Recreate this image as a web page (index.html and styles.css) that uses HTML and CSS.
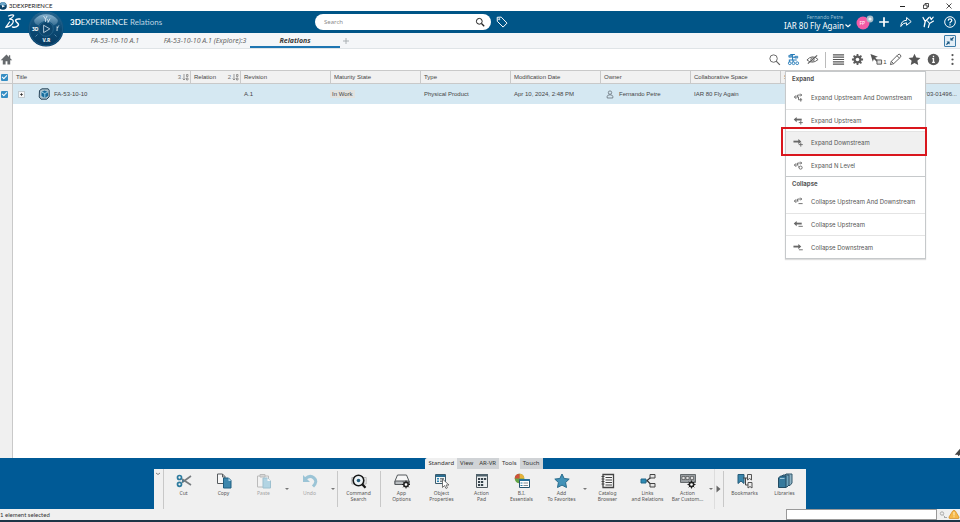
FILE: index.html
```html
<!DOCTYPE html>
<html lang="en">
<head>
<meta charset="utf-8">
<title>3DEXPERIENCE</title>
<link rel="stylesheet" href="styles.css">
</head>
<body>
<header class="titlebar">
  <svg class="app-icon" viewBox="0 0 8 8"><circle cx="3" cy="4" r="3.8" fill="#0d4368"/><path d="M0 3a3 3 0 0 1 6 0L3 4z" fill="#6ba5c8"/><path d="M2 3l3 1.2L2 5.4z" fill="#fff"/></svg>
  <span class="app-name">3DEXPERIENCE</span>
  <div class="window-controls">
    <button aria-label="Minimize"><svg viewBox="0 0 8 8"><path d="M1 4.5h5" stroke="#222" fill="none"/></svg></button>
    <button aria-label="Restore"><svg viewBox="0 0 8 8"><path d="M1.5 3h3.5v3.5H1.5zM3 3V1.5h3.500V5H5" stroke="#222" stroke-width=".8" fill="none"/></svg></button>
    <button aria-label="Close"><svg viewBox="0 0 8 8"><path d="M1.500 1.500l5 5m0-5l-5 5" stroke="#222" stroke-width=".8" fill="none"/></svg></button>
  </div>
</header>

<div class="topbar">
  <svg class="ds-logo" viewBox="0 0 16 16" fill="none" stroke="#fff" stroke-linecap="round" stroke-linejoin="round"><path d="M3.500 2q4-1.700 5.200-.7Q8.600 3 4.800 5" stroke-width="1.200"/><path d="M4.800 5Q9.300 5.400 8 8.500 6.200 12.500.8 13.300L4.500 8" stroke-width="1.300"/><path d="M15 5.100q-3.600-.6-4.400 1-.1 1.400 1.700 2.700 2 1.600.6 2.900Q11 13.700 7.500 13" stroke-width="1.500"/></svg>
  <button class="compass" aria-label="Compass">
    <svg viewBox="0 0 36 36">
      <defs><linearGradient id="rim" x1="0" y1="0" x2="0" y2="1"><stop offset="0" stop-color="#2b6a92"/><stop offset=".5" stop-color="#0b4a75"/><stop offset="1" stop-color="#073a60"/></linearGradient>
      <linearGradient id="lit" x1="0" y1="0" x2="0" y2="1"><stop offset="0" stop-color="#89b5d1"/><stop offset="1" stop-color="#356d92"/></linearGradient></defs>
      <circle cx="18" cy="18" r="17.600" fill="url(#rim)"/><circle cx="18" cy="18" r="16.600" fill="none" stroke="#1c5f8c" stroke-width=".8"/>
      <path d="M6.500 8.500A15 15 0 0 1 29.500 8.500Q31 12 25.500 14.500A8.500 8.500 0 0 0 10.500 14.500Q5 12 6.500 8.500z" fill="url(#lit)"/>
      <circle cx="18" cy="18" r="7.300" fill="#0d466d" stroke="#2f7097" stroke-width=".6"/>
      <path d="M15.600 14.200l6.200 3.700-6.200 3.700z" fill="none" stroke="#d5e5ef" stroke-width=".8"/>
      <path d="M9.500 23.500l-2 2M26.500 23.500l2 2" stroke="#6594b2" stroke-width=".8"/>
      <path d="M15.500 5l2 3.200V11m1.500-6l-1.500 3.200M19 8l1 1.500V11.500M22 7.500l-2 4" stroke="#eef6fa" stroke-width=".7" fill="none"/>
      <path d="M29 15.500q.3 1 0 4.500M29 16.500l1.800-.8m0-1.200v.5" stroke="#eef6fa" stroke-width=".8" fill="none"/>
      <text x="4" y="20" class="compass-text">3D</text><text x="14.500" y="31" class="compass-text">V.R</text>
    </svg>
  </button>
  <div class="brand"><b>3D</b>EXPERIENCE <span>Relations</span></div>
  <form class="search" role="search">
    <input type="search" aria-label="Search" placeholder="Search">
    <button type="button" aria-label="Run search"><svg viewBox="0 0 10 10" fill="none" stroke="#222"><circle cx="4.300" cy="4.300" r="2.900"/><path d="M6.500 6.500l2.700 2.700" stroke-width="1.300"/></svg></button>
  </form>
  <button class="icon-btn tag" aria-label="Tags"><svg viewBox="0 0 12 12" fill="none" stroke="#fff" stroke-width="1"><path d="M1.200 1.300l4-.2 5.800 6-3.900 4-5.800-5.800z" stroke-linejoin="round"/><circle cx="3.200" cy="3.200" r=".6"/></svg></button>
  <div class="account">
    <span class="user">Fernando Petre</span>
    <button class="space">IAR 80 Fly Again<svg viewBox="0 0 8 5"><path d="M1.500 1.500L4 3.600l2.500-2.100" stroke="#fff" stroke-width="1.200" fill="none"/></svg></button>
  </div>
  <button class="avatar" aria-label="Profile">
    <svg viewBox="0 0 18 16"><circle cx="7" cy="9" r="6.500" fill="#f15ca6"/><text x="3.500" y="11" class="avatar-text">FP</text><circle cx="14" cy="5" r="3.400" fill="#a9bdca"/><circle cx="14" cy="5" r="1.600" fill="#edf3f7"/></svg>
  </button>
  <nav class="top-actions">
    <button aria-label="Add"><svg viewBox="0 0 14 14"><path d="M7 2.200v9.600M2.200 7h9.600" stroke="#fff" stroke-width="1.700"/></svg></button>
    <button aria-label="Share"><svg viewBox="0 0 14 14" fill="none" stroke="#fff" stroke-linejoin="round"><path d="M1.800 11.500Q2 5.500 7.600 5.300V2.500L12.200 6.600 7.600 10.300V7.800Q4 7.600 1.800 11.500z"/></svg></button>
    <button aria-label="Community"><svg viewBox="0 0 14 14" fill="none" stroke="#fff" stroke-linecap="round"><path d="M2 2.500l2.200 4L3.200 11.500M4.200 6.500L8 2.500" stroke-width="1.300"/><path d="M6.500 6l2 2.500L7.300 12.500M8.500 8.500L12.500 6M9 2l1.200 2.600M10.200 4.600l2-2.500" stroke-width="1.100"/></svg></button>
    <button aria-label="Help"><svg viewBox="0 0 14 14" fill="none" stroke="#fff"><circle cx="7" cy="7" r="5.300"/><path d="M5.200 5.600q.1-1.700 1.800-1.700t1.800 1.500q0 .8-1 1.400T7 8.300" stroke-width="1.200"/><path d="M7 9.200v1.300" stroke-width="1.200"/></svg></button>
  </nav>
</div>

<nav class="tabs">
  <a class="tab" href="#one">FA-53-10-10 A.1</a>
  <a class="tab" href="#explore">FA-53-10-10 A.1 (Explore):3</a>
  <a class="tab active" href="#relations">Relations</a>
  <button class="add-tab" aria-label="Add tab"><svg viewBox="0 0 8 8"><path d="M4 1v6M1 4h6" stroke="#a3a9ad" stroke-width=".9"/></svg></button>
  <button class="shrink" aria-label="Exit full screen"><svg viewBox="0 0 12 12"><path d="M6.500 5.500V1.800l1.300 1.300L9.800 1.200l1 1-1.900 2 1.300 1.300zM5.500 6.500v3.700L4.200 8.900 2.200 10.800l-1-1 1.900-2L1.800 6.500z" fill="#11517d"/></svg></button>
</nav>

<main class="workspace">
  <div class="toolbar">
    <button aria-label="Home" class="home"><svg viewBox="0 0 14 14"><path d="M7 1.500L.8 7.800H3V12.500h3V9h2v3.500h3V7.800h2.200L11 5.600V2.500H9.600v1.700z" fill="#666a6d"/></svg></button>
    <div class="tools">
      <button aria-label="Find"><svg viewBox="0 0 14 14" fill="none" stroke="#616161"><circle cx="6" cy="6" r="4"/><path d="M8.800 8.800l4 4" stroke-width="1.300"/></svg></button>
      <button aria-label="Expand and collapse" aria-expanded="true"><svg viewBox="0 0 14 14" fill="none" stroke="#267bb8"><path d="M3.500 1.500h5M6 1.500v6M6 4.500h4M2.500 10V7.500h8M6.500 7.500V10" stroke-width="1.100"/><path d="M2 2.500h3v2H2zM8.500 3.500h3v2h-3z" fill="#77acd1" stroke-width=".8"/><circle cx="3" cy="11" r="1.500"/><circle cx="7" cy="11" r="1.500"/><circle cx="11" cy="11" r="1.500"/></svg></button>
      <button aria-label="Hide"><svg viewBox="0 0 14 14" fill="none" stroke="#5b5b5b"><path d="M1 7.500Q7 1 13 7q-6 5.500-12 .5z"/><circle cx="7" cy="7" r="1.800"/><path d="M2 11.500L12 2.500" stroke-width="1.200"/></svg></button>
      <span class="divider"></span>
      <button aria-label="List view"><svg viewBox="0 0 14 14" stroke="#555" stroke-width="1.300"><path d="M1 2h12M1 4.500h12M1 7h12M1 9.500h12M1 12h12"/></svg></button>
      <button aria-label="Settings"><svg viewBox="0 0 14 14"><circle cx="7" cy="7" r="3.100" fill="none" stroke="#5c5c5c" stroke-width="2.400"/><path d="M7 1v12M1 7h12M2.800 2.800l8.400 8.400M11.200 2.800l-8.400 8.400" stroke="#5c5c5c" stroke-width="1.900"/><circle cx="7" cy="7" r="1.900" fill="#fff"/></svg></button>
      <button aria-label="Selection" class="selection"><svg viewBox="0 0 14 14"><path d="M.5 1l8 3-3 1.200L8.500 8.200 7.200 9.500 4.200 6.500 3 9.500z" fill="#555"/><path d="M7.500 7.500h5v4.500h-5z" fill="#ddd" stroke="#555"/></svg><span>1</span></button>
      <button aria-label="Edit"><svg viewBox="0 0 14 14" fill="none" stroke="#555"><path d="M1.500 12.500l1-3.500L9.500 2q1.500-1.500 2.700 0t0 2.700L5 11.500z"/><path d="M8.700 3l2.500 2.500M2.500 9l2.500 2.500"/></svg></button>
      <button aria-label="Favorites"><svg viewBox="0 0 14 14"><path d="M7 .8l1.900 4.100 4.500.5-3.300 3 .9 4.500L7 10.700l-4 2.200.9-4.500-3.300-3 4.500-.5z" fill="#555"/></svg></button>
      <button aria-label="Information"><svg viewBox="0 0 14 14"><circle cx="7" cy="7" r="6.200" fill="#5a5a5a"/><path d="M7 3v1.600M5.700 6H7v4M5.500 10.200h3" stroke="#fff" stroke-width="1.400" fill="none"/></svg></button>
      <button aria-label="More"><svg viewBox="0 0 14 14" fill="#555"><circle cx="7" cy="2.200" r="1.200"/><circle cx="7" cy="7" r="1.200"/><circle cx="7" cy="11.800" r="1.200"/></svg></button>
    </div>
    <div class="menu" role="menu">
      <h2>Expand</h2>
      <div class="group four">
        <button role="menuitem"><svg viewBox="0 0 12 12"><path d="M1.500 5.500h4.500M3.500 3.500l-2 2 2 2M5 5.500V3.300h4.500M8 1.800l1.500 1.500L8 4.800M6 5.500V8.500" /><path d="M6 8.500h4M8.500 6.500v4"/></svg>Expand Upstream And Downstream</button>
        <button role="menuitem"><svg viewBox="0 0 12 12"><path d="M.8 5L4 2.200V7.800z" class="solid"/><path d="M3 5h6.500" class="thick"/><path d="M8.500 6v4.500M6.300 8.300h4.400"/></svg>Expand Upstream</button>
        <button role="menuitem" class="current"><svg viewBox="0 0 12 12"><path d="M9 5L5.800 2.200V7.800z" class="solid"/><path d="M.5 5H7" class="thick"/><path d="M8.500 6v4.500M6.300 8.300h4.400"/></svg>Expand Downstream<span class="marker"></span></button>
        <button role="menuitem"><svg viewBox="0 0 12 12"><path d="M1.500 5.500h4.500M3.500 3.500l-2 2 2 2M5 5.500V3.300h4.500M8 1.800l1.500 1.500L8 4.800"/><circle cx="8.300" cy="8.300" r="1.700"/><path d="M5.500 7.500h1.500"/></svg>Expand N Level</button>
      </div>
      <h2 class="second">Collapse</h2>
      <div class="group three">
        <button role="menuitem"><svg viewBox="0 0 12 12"><path d="M1.500 5.500h4.500M3.500 3.500l-2 2 2 2M5 5.500V3.300h4.500M8 1.800l1.500 1.500L8 4.800M6 8.300h4.500"/></svg>Collapse Upstream And Downstream</button>
        <button role="menuitem"><svg viewBox="0 0 12 12"><path d="M.8 5L4 2.200V7.800z" class="solid"/><path d="M3 5h6.500" class="thick"/><path d="M6 8h4.700"/></svg>Collapse Upstream</button>
        <button role="menuitem"><svg viewBox="0 0 12 12"><path d="M9 5L5.800 2.200V7.800z" class="solid"/><path d="M.5 5H7" class="thick"/><path d="M6.500 8.500h4.200"/></svg>Collapse Downstream</button>
      </div>
    </div>
  </div>
  <table class="grid">
    <colgroup><col class="c-check"><col class="c-title"><col class="c-relation"><col class="c-std"><col class="c-std"><col class="c-std"><col class="c-std"><col class="c-std"><col class="c-std"><col class="c-std"><col></colgroup>
    <thead><tr>
      <th><input type="checkbox" checked aria-label="Select all"></th>
      <th><div class="sortable">Title<span class="sort">3 <svg viewBox="0 0 7 8"><path d="M2 1v6M.6 5.500L2 7l1.400-1.500M4.500 1.500h1.500v2H4.500zM4.500 5h1.500v2H4.500z"/></svg></span></div></th>
      <th><div class="sortable">Relation<span class="sort">2 <svg viewBox="0 0 7 8"><path d="M2 1v6M.6 5.500L2 7l1.400-1.500M4.500 1.500h1.500v2H4.500zM4.500 5h1.500v2H4.500z"/></svg></span></div></th>
      <th>Revision</th><th>Maturity State</th><th>Type</th><th>Modification Date</th><th>Owner</th><th>Collaborative Space</th><th>S</th><th></th>
    </tr></thead>
    <tbody><tr>
      <td><input type="checkbox" checked aria-label="Select FA-53-10-10"></td>
      <td><div class="item"><button class="expander" aria-label="Expand row"><svg viewBox="0 0 7 7"><path d="M3.500 1.500v4M1.500 3.500h4" stroke="#222"/></svg></button>
        <svg class="product" viewBox="0 0 12 12"><path d="M1.500 2.500L4 .8h6.200l1 1.500v6.500l-2.400 2.400H3L1.200 9z" fill="#a9c0cc" stroke="#29465b"/><path d="M3.500 4l3-1.500L10 4v4L6.800 10 3.500 8z" fill="#176c9c"/><path d="M3.500 4l3.300 1.500L10 4M6.800 5.500V10" stroke="#b5e0f2" stroke-width=".8" fill="none"/></svg>FA-53-10-10</div></td>
      <td></td><td>A.1</td><td><span class="state">In Work</span></td><td>Physical Product</td><td>Apr 10, 2024, 2:48 PM</td>
      <td><div class="owner"><svg viewBox="0 0 8 9" fill="none" stroke="#667078" stroke-width=".8"><circle cx="4" cy="2.600" r="1.700"/><path d="M1.200 8V6.200Q1.500 4.800 4 4.800t2.800 1.400V8z"/></svg>Fernando Petre</div></td>
      <td>IAR 80 Fly Again</td><td></td><td class="code">703-01496...</td>
    </tr></tbody>
  </table>
  <svg class="corner" viewBox="0 0 8 10"><path d="M8 0L1 8h4l1 2 2-2z" fill="#444"/></svg>
</main>

<section class="dock">
  <div class="dock-tabs" role="tablist">
    <button role="tab" class="on">Standard</button><button role="tab">View</button><button role="tab">AR-VR</button><button role="tab" class="on">Tools</button><button role="tab">Touch</button>
  </div>
  <div class="actionbar">
    <button class="fold" aria-label="Collapse action bar"><svg viewBox="0 0 6 4"><path d="M1 1l2 1.500L5 1" stroke="#666" stroke-width=".8" fill="none"/></svg></button>
    <button class="action"><svg viewBox="0 0 16 16"><path d="M15 3L6 9.500M15 12L6 6" stroke="#767b7e" stroke-width="1.600"/><path d="M6 6.500L9 8 6 9.500" fill="#4b7890"/><circle cx="3.500" cy="4.500" r="2" fill="none" stroke="#2d7b9e" stroke-width="1.700"/><circle cx="3.500" cy="11.300" r="2" fill="none" stroke="#2d7b9e" stroke-width="1.700"/></svg><span>Cut</span></button>
    <button class="action"><svg viewBox="0 0 16 16"><path d="M1.500 1h5l2.500 2.500v7H1.500zM6.500 1v3H9" fill="#f7f7f7" stroke="#565b5e"/><path d="M7.500 5h5L15 7.500V15H7.500z" fill="#3e87ad" stroke="#1e5e80"/><path d="M12.500 5v3H15z" fill="#acd6e9"/></svg><span>Copy</span></button>
    <button class="action faded"><svg viewBox="0 0 16 16"><path d="M1.500 3h11v11h-11zM4 1.500h5v2.500H4z" fill="#f5f5f5" stroke="#888"/><path d="M7 5h4.500L14.500 8v7H7z" fill="#76b9d7" stroke="#4d91b0"/><path d="M11.500 5v3h3z" fill="#fff"/></svg><span>Paste</span></button>
    <button class="drop" aria-label="Paste options"></button>
    <button class="action faded"><svg viewBox="0 0 16 16"><path d="M3.500 5.500Q8 1.500 12 5t-1 8.500" fill="none" stroke="#489abd" stroke-width="3"/><path d="M1 2v7h7z" fill="#489abd"/></svg><span>Undo</span></button>
    <button class="drop" aria-label="Undo options"></button>
    <span class="rule"></span>
    <button class="action"><svg viewBox="0 0 16 16"><path d="M.8 4.500h14.400v6.500H.8z" fill="#eee" stroke="#aaa" stroke-width=".8"/><circle cx="7.500" cy="7.500" r="5.300" fill="#eef4f7" stroke="#171717" stroke-width="1.600"/><path d="M11.200 11.200l3.300 3.600" stroke="#171717" stroke-width="2.200"/><circle cx="7.500" cy="7.500" r="1.800" fill="#275d7b"/></svg><span>Command<br>Search</span></button>
    <span class="rule"></span>
    <button class="action"><svg viewBox="0 0 16 16"><path d="M1 8L3.500 2h9L15 8v3.500H1z" fill="#f6f6f6" stroke="#54595c"/><path d="M1 8h14v3.500H1z" fill="#b9bdc0" stroke="#54595c"/><circle cx="12" cy="11.500" r="2.200" fill="none" stroke="#222" stroke-width="1.500"/><path d="M12 7.500v8M8 11.500h8M9.200 8.700l5.600 5.600M14.800 8.700l-5.600 5.600" stroke="#222"/><circle cx="12" cy="11.500" r="1.300" fill="#fff"/></svg><span>App<br>Options</span></button>
    <button class="action"><svg viewBox="0 0 16 16"><path d="M1.500 1.500h10v9h-10z" fill="#f2f5f6" stroke="#3c5b6c"/><path d="M2 2h9v2H2z" fill="#2a6e92"/><path d="M3 5.500h2M3 7h2M3 8.500h2" stroke="#2986b6"/><path d="M6 5.500h4M6 7h4M6 8.500h3" stroke="#7b8589"/><path d="M8.500 6v8.500l2-2 1.500 3 1.500-.8-1.500-2.700h3z" fill="#fff" stroke="#555" stroke-width=".8"/></svg><span>Object<br>Properties</span></button>
    <button class="action"><svg viewBox="0 0 16 16"><path d="M2.500 1.500h11v13h-11z" fill="#eceff0" stroke="#515a60"/><path d="M2 1h12v2.500H2z" fill="#50626c"/><path d="M4 5h2.200v2H4zM7 5h2.200v2H7zM10 5h2.200v2H10zM4 8h2.200v2H4zM7 8h2.200v2H7zM4 11h2.200v2H4zM7 11h2.200v2H7z" fill="#36424b"/></svg><span>Action<br>Pad</span></button>
    <button class="action"><svg viewBox="0 0 16 16"><circle cx="5.500" cy="5.500" r="4.800" fill="#65a546"/><path d="M5.500 5.500V.7a4.800 4.800 0 0 1 4.800 4.800z" fill="#e7b13b"/><path d="M5.500 5.500H.7A4.800 4.800 0 0 1 5.500.7z" fill="#cf513a"/><path d="M5.500 6.500h10v8h-10z" fill="#fff" stroke="#26546e"/><path d="M5.500 6h10v2h-10z" fill="#26719b"/><path d="M6.500 10h2M6.500 12.500h2" stroke="#287ba5"/><path d="M9.500 10H14M9.500 12.500H14" stroke="#818b91"/></svg><span>B.I.<br>Essentials</span></button>
    <button class="action"><svg viewBox="0 0 16 16"><path d="M8 1l2.200 4.500 5 .6-3.600 3.400.9 5L8 12.100l-4.500 2.400.9-5L.8 6.100l5-.6z" fill="#4292b8" stroke="#286b8b"/></svg><span>Add<br>To Favorites</span></button>
    <button class="drop" aria-label="Favorite options"></button>
    <button class="action"><svg viewBox="0 0 16 16"><path d="M3 1.500h10.500v13H3z" fill="#fafafa" stroke="#444" stroke-width="1.300"/><path d="M5.500 4.500H12M5.500 7H12M5.500 9.500H12M5.500 12H12" stroke="#444"/><path d="M1.500 3.500h3M1.500 6h3M1.500 8.500h3M1.500 11h3" stroke="#444"/></svg><span>Catalog<br>Browser</span></button>
    <button class="action"><svg viewBox="0 0 16 16"><path d="M5 8h3M12 3.500L7 7.500l5 5" stroke="#333" fill="none" stroke-width="1.200"/><path d="M1 6h5v4H1z" fill="#2e8bb4" stroke="#22688a"/><path d="M10 1.500h5v3.500h-5zM10 10.500h5V14h-5z" fill="#e5e5e5" stroke="#444"/></svg><span>Links<br>and Relations</span></button>
    <button class="action"><svg viewBox="0 0 16 16"><path d="M.5 1.500h15v8H.5z" fill="#989da0" stroke="#656a6d"/><path d="M2 3.500h3v3H2zM6 3.500h3v3H6zM10.500 3.500h3v3h-3z" fill="#ddd" stroke="#444" stroke-width=".6"/><circle cx="11.500" cy="11.500" r="2.200" fill="none" stroke="#222" stroke-width="1.500"/><path d="M11.500 7.500v8M7.500 11.500h8M8.700 8.700l5.600 5.600M14.300 8.700l-5.600 5.600" stroke="#222"/><circle cx="11.500" cy="11.500" r="1.300" fill="#fff"/></svg><span>Action<br>Bar Custom...</span></button>
    <button class="drop" aria-label="Action bar options"></button>
    <button class="next" aria-label="Next page"><svg viewBox="0 0 5 8"><path d="M.5.500L4.500 4l-4 3.500z" fill="#666"/></svg></button>
    <span class="rule"></span>
    <button class="action"><svg viewBox="0 0 16 16"><path d="M1 1.500h6v9L4 8l-3 2.500z" fill="#3986ac" stroke="#255b79"/><path d="M6 5h5M8.500 5v7H11" fill="none" stroke="#444"/><path d="M10.500 1.500h4V7l-2-1.500-2 1.500zM11 9.500h4V15l-2-1.500L11 15z" fill="#ececec" stroke="#555"/></svg><span>Bookmarks</span></button>
    <button class="action"><svg viewBox="0 0 16 16"><path d="M7 3l2-2h6v9l-2 2.500H7z" fill="#8eb3c5" stroke="#33586d"/><path d="M4 4l2-2h6v10l-2 2H4z" fill="#70a6bf" stroke="#2c526b"/><path d="M1.500 5l2-2H9v11.500H1.500z" fill="#36799c" stroke="#234b62"/><path d="M3 5.500h4.500" stroke="#9fc7da"/></svg><span>Libraries</span></button>
  </div>
</section>

<footer class="status">
  <span>1 element selected</span>
  <input type="text" class="command" aria-label="Command input">
  <button aria-label="Power input"><svg viewBox="0 0 10 10" fill="none" stroke="#aaa"><circle cx="4" cy="3.500" r="1.700"/><path d="M5.500 5.500l1.500 1.500M6 7.500h3"/></svg></button>
  <button aria-label="Warnings"><svg viewBox="0 0 12 11"><path d="M1 8L4.500 2.200Q6 .2 7.500 2.200L11 8q.5 1.500-1 1.500H2Q.5 9.500 1 8z" fill="#f5b748" stroke="#d18b24" stroke-width=".7"/><path d="M6 3v3.500M6 7.300v1" stroke="#fff2cc"/></svg></button>
</footer>
</body>
</html>
```
FILE: styles.css
```css
* { box-sizing: border-box; }
body {
  margin: 0;
  min-height: 100vh;
  display: flex;
  flex-direction: column;
  background: #fff;
  color: #454545;
  font: 6px/8px "Liberation Sans", Arial, sans-serif;
  overflow: hidden;
}
button {
  margin: 0;
  padding: 0;
  border: 0;
  background: none;
  color: inherit;
  font: inherit;
}
svg { display: block; flex: none; }
a { color: inherit; text-decoration: none; }

.titlebar { display: flex; align-items: center; height: 11px; color: #222; font-family: Lato, sans-serif; }
.app-icon { width: 8px; height: 8px; margin-right: 1px; }
.window-controls { display: flex; gap: 15px; margin-left: auto; padding-right: 7px; }
.window-controls svg { width: 8px; height: 8px; }

.topbar {
  position: relative;
  display: flex;
  align-items: center;
  height: 22px;
  background: #005587;
  color: #fff;
  font-family: "Noto Sans", sans-serif;
}
.ds-logo { width: 16px; height: 16px; margin-left: 5px; }
.compass { position: absolute; z-index: 2; left: 28px; top: 0; }
.compass svg { width: 36px; height: 36px; }
.compass-text { font: bold 5px "Noto Sans", sans-serif; fill: #fff; }
.brand { width: 245px; margin-left: 49px; font: 8px/10px Lato, sans-serif; color: #e7f0f5; }
.brand b { color: #fff; }
.brand span { color: #bcd4e2; }
.search { display: flex; align-items: center; flex: 0 0 176px; height: 16px; padding: 0 6px 0 9px; border-radius: 8px; background: #fff; }
.search input { flex: 1; min-width: 0; padding: 0; border: 0; outline: 0; background: none; font: 6px/8px "Noto Sans", sans-serif; }
.search input::placeholder { color: #8b8b8b; }
.search svg { width: 10px; height: 10px; }
.tag { margin-left: 5px; }
.tag svg { width: 12px; height: 12px; }
.account { display: flex; flex-direction: column; align-items: flex-end; margin-left: auto; }
.user { padding-right: 9px; font-size: 5px; line-height: 7px; color: #9dbfd3; }
.space { display: flex; align-items: center; font-size: 8px; line-height: 10px; }
.space svg { width: 8px; height: 5px; }
.avatar { margin: 0 3px 0 4px; }
.avatar svg { width: 18px; height: 16px; }
.avatar-text { font: 5px "Noto Sans", sans-serif; fill: #fff; }
.top-actions { display: flex; gap: 8px; padding-right: 3px; }
.top-actions svg { width: 14px; height: 14px; }

.tabs {
  display: flex;
  height: 16px;
  padding-left: 70px;
  border-bottom: 1px solid #dfe4e7;
  background: #f4f6f8;
  color: #666;
  font: italic 7px/15px "Noto Sans", sans-serif;
}
.tab { width: 90px; text-align: center; white-space: nowrap; }
.tab.active { border-bottom: 2px solid #1e76b2; color: #3b3b3b; font-weight: bold; }
.add-tab { margin-left: 2px; }
.add-tab svg { width: 8px; height: 8px; }
.shrink { align-self: center; margin: 0 4px 0 auto; border: 1px solid #3d7da8; border-radius: 1px; background: #e2eef6; }
.shrink svg { width: 10px; height: 10px; }

.workspace {
  position: relative;
  flex: 1;
  background: linear-gradient(to right, #f0f0f0 12px, #c9c9c9 12px, #c9c9c9 13px, #fff 13px);
}
.toolbar { position: relative; display: flex; align-items: center; justify-content: space-between; height: 21px; background: #fff; }
.toolbar > button svg, .tools svg { width: 13px; height: 13px; }
.tools { display: flex; align-items: center; gap: 6px; padding-right: 1px; }
.divider { width: 1px; height: 16px; background: #bbb; }
.selection { display: flex; align-items: flex-end; }
.selection span { width: 4px; margin-right: -4px; font-size: 6px; }

.grid { width: 100%; border-collapse: separate; border-spacing: 0; table-layout: fixed; line-height: 8px; }
.c-check { width: 13px; }
.c-title { width: 178px; }
.c-relation { width: 50px; }
.c-std { width: 90px; }
.grid th, .grid td { padding: 0 3px; text-align: left; font-weight: normal; white-space: nowrap; }
.grid th { height: 14px; border: solid #c9c9c9; border-width: 1px 1px 1px 0; background: #f1f1f1; }
.grid th:last-child { border-right: 0; }
.grid td { height: 20px; background: #d5e8f2; }
.grid th:first-child, .grid td:first-child { padding: 0 0 0 1px; background: #f0f0f0; border-right: 1px solid #c9c9c9; }
.grid input {
  appearance: none;
  display: block;
  position: relative;
  width: 7px;
  height: 7px;
  margin: 0;
  border-radius: 1px;
  background: #368ec4;
}
.grid input::after { content: ""; position: absolute; left: 1px; top: 1px; width: 4px; height: 2px; border: solid #fff; border-width: 0 0 1px 1px; transform: rotate(-45deg); }
.sortable { display: flex; justify-content: space-between; margin-right: -2px; }
.sort { display: flex; gap: 1px; color: #777; }
.sort svg { width: 7px; height: 8px; fill: none; stroke: #777; stroke-width: .7px; }
.item { display: flex; align-items: center; padding-left: 2px; }
.expander { border: 1px solid #c3ccd1; background: #f7f7f7; }
.expander svg { width: 5px; height: 5px; }
.product { width: 12px; height: 12px; margin: 0 4px 0 13px; }
.state { margin-left: -4px; padding: 1px 2px; background: #e2e2df; }
.owner { display: flex; align-items: center; gap: 5px; padding-left: 2px; }
.owner svg { width: 8px; height: 9px; }
.grid .code { text-align: right; }
.corner { position: absolute; right: 0; bottom: 1px; width: 6px; height: 9px; }

.menu {
  position: absolute;
  z-index: 3;
  top: 22px;
  right: 34px;
  width: 141px;
  border: 1px solid #c6c9cb;
  background: #fff;
  box-shadow: 0 1px 1px #ddd;
  color: #555;
  font: 6px/9px Inter, sans-serif;
}
.menu h2 { height: 14px; margin: 0; padding-left: 6px; font: bold 6px/14px Inter, sans-serif; }
.menu .second { border-top: 1px solid #c6c9cb; }
.group { display: grid; grid-auto-rows: 1fr; }
.group.four { height: 90px; }
.group.three { height: 68px; }
.group button {
  position: relative;
  display: flex;
  align-items: center;
  gap: 7px;
  padding-left: 7px;
  text-align: left;
  white-space: nowrap;
}
.group button + button { border-top: 1px solid #e4e4e4; }
.group .current { z-index: 1; background: #f0f0f0; }
.group svg { width: 11px; height: 11px; fill: none; stroke: #686868; stroke-width: 1px; }
.group .solid { fill: #686868; stroke: none; }
.group .thick { stroke-width: 2px; }
.marker { position: absolute; inset: -5px -2px -2px -5px; border: 2px solid #d9161d; pointer-events: none; }

.dock { display: flex; flex-direction: column; align-items: center; background: #005a96; }
.dock-tabs { display: flex; height: 11px; margin-left: 8px; border-radius: 3px 0 0; overflow: hidden; background: #d0d3d6; color: #333; }
.dock-tabs button { padding: 0 3px; font: 6px/11px "Noto Sans", sans-serif; }
.dock-tabs .on { background: #f0f0f0; }
.actionbar {
  display: flex;
  height: 40px;
  margin-right: 1px;
  padding-right: 1px;
  background: #f0f0f0;
  color: #555;
  font: 5px/6px "Noto Sans", sans-serif;
}
.fold { display: flex; justify-content: center; width: 10px; padding-top: 3px; border-right: 1px solid #c8c8c8; }
.fold svg { width: 6px; height: 4px; }
.action { display: flex; flex-direction: column; align-items: center; gap: 1px; width: 40px; padding-top: 4px; text-align: center; white-space: nowrap; }
.action svg { width: 16px; height: 16px; }
.faded { opacity: .5; }
.drop { display: flex; align-items: center; justify-content: center; width: 6px; }
.drop::before { content: ""; width: 0; border: solid transparent; border-width: 2px 2px 0; border-top-color: #777; }
.rule { width: 1px; height: 36px; margin: 2px 1px 0; background: #c8c8c8; }
.next { width: 8px; display: flex; align-items: center; justify-content: center; border-left: 1px solid #ddd; }
.next svg { width: 5px; height: 8px; }

.status {
  display: flex;
  align-items: center;
  height: 13px;
  border-bottom: 2px solid #1d3547;
  background: #f0f0f0;
  color: #333;
  font: 6px/8px Lato, sans-serif;
}
.command { width: 151px; height: 11px; margin-left: auto; padding: 0 2px; border: 1px solid #999; border-radius: 0; background: #fff; font: inherit; }
.status button { width: 11px; }
.status svg { width: 10px; height: 10px; margin: auto; }
.status button:last-child { width: 12px; }
.status button:last-child svg { width: 12px; height: 11px; }
```
